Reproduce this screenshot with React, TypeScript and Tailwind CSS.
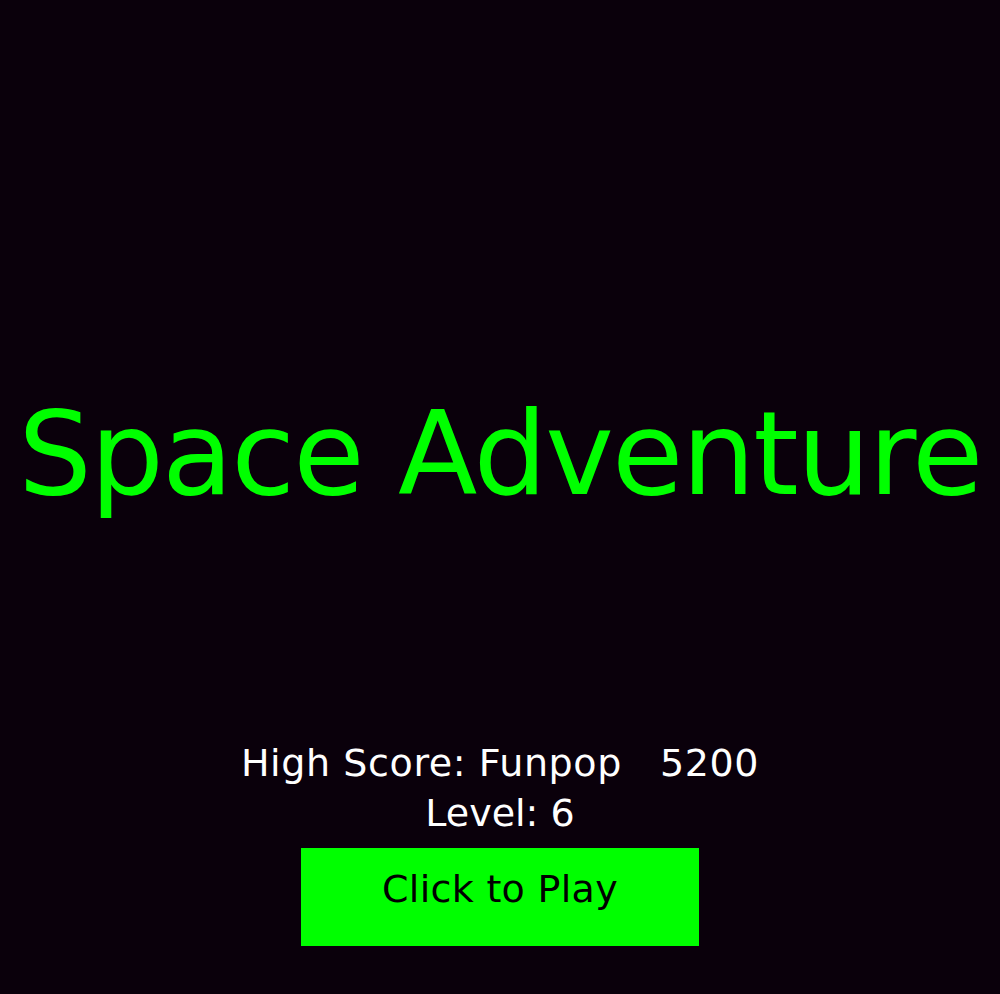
export default function App() {
  return (
    <div
      className="w-[1000px] h-[994px] bg-[#0a000b] flex flex-col items-center overflow-hidden"
      style={{ fontFamily: '"DejaVu Sans", Verdana, sans-serif' }}
    >
      <h1 className="mt-[396px] text-[116px] leading-none tracking-[-1.8px] text-[#00ff00] whitespace-nowrap">
        Space Adventure
      </h1>
      <div className="mt-[226px] text-[38px] leading-[50px] tracking-[0.6px] text-white whitespace-pre text-center">
        High Score: Funpop   5200
      </div>
      <div className="text-[38px] leading-[50px] text-white text-center">Level: 6</div>
      <button className="mt-[10px] w-[398px] h-[98px] bg-[#00ff00] text-black text-[38px] leading-none tracking-[0.3px] pt-[22px] flex justify-center items-start">
        Click to Play
      </button>
    </div>
  );
}
